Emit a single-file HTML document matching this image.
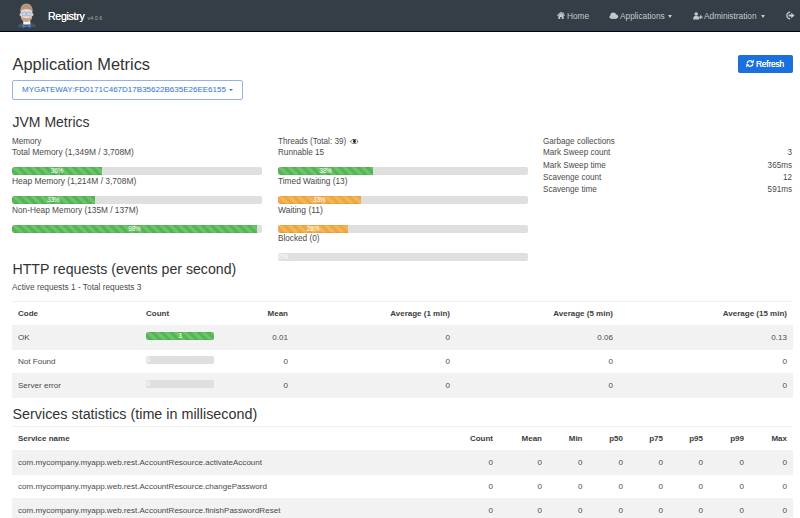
<!DOCTYPE html>
<html><head><meta charset="utf-8">
<style>
*{box-sizing:border-box;margin:0;padding:0}
html,body{width:800px;height:518px;overflow:hidden;background:#fff}
body{font-family:"Liberation Sans",sans-serif;color:#333;font-size:8.2px;position:relative}
.abs{position:absolute;white-space:nowrap}
.nav{position:absolute;left:0;top:0;width:800px;height:32px;background:#353d47;border-bottom:1px solid #02021a}
.brand{position:absolute;left:48px;top:9.5px;color:#fff;font-size:10.6px;letter-spacing:-0.3px;line-height:12px;text-shadow:0 0 0.3px #fff}
.brand small{font-size:5.4px;letter-spacing:0;text-shadow:none;color:#aaa;margin-left:3px}
.caret{position:absolute;top:15px;width:0;height:0;border-left:2.5px solid transparent;border-right:2.5px solid transparent;border-top:3px solid #c4c8cc}
.navl{position:absolute;top:11px;color:#c4c8cc;font-size:8.3px;line-height:10px}
h2{position:absolute;left:12px;font-weight:normal;font-size:16.4px;color:#333;white-space:nowrap;line-height:18px}
h3{position:absolute;left:12px;font-weight:normal;font-size:14px;color:#333;white-space:nowrap;line-height:16px}
.btn-r{position:absolute;left:738px;top:55px;width:55px;height:18px;background:#1b6fdf;border-radius:2px;color:#fff;font-size:7.9px}
.dd{position:absolute;left:12px;top:80px;width:231px;height:20px;border:1px solid #90b3ec;border-radius:2px;color:#2a72da;font-size:8.02px}
.txt{position:absolute;white-space:nowrap;font-size:8.15px;line-height:10px;color:#4a4a4a}
.bar{position:absolute;height:8px;background:#dfdfdf;border-radius:2px;overflow:hidden}
.fill{position:absolute;left:0;top:0;height:8px;border-radius:2px 0 0 2px;
 background-image:linear-gradient(45deg,rgba(255,255,255,.17) 25%,transparent 25%,transparent 50%,rgba(255,255,255,.17) 50%,rgba(255,255,255,.17) 75%,transparent 75%,transparent);
 background-size:9.2px 9.2px;color:#fff;font-size:6.6px;letter-spacing:-0.3px;line-height:8.4px;text-align:center;box-shadow:inset 0 -0.6px 0 rgba(0,100,0,.15),inset 0 0.6px 0 rgba(0,100,0,.1)}
.g{background-color:#53b653}
.o{background-color:#f0a73e}
table{position:absolute;left:12px;width:781px;border-collapse:collapse;table-layout:fixed}
td,th{height:24px;padding:0 6px;font-size:8.05px;vertical-align:middle;white-space:nowrap;border-top:1px solid #f0f0f0;color:#4a4a4a}
th{font-weight:bold;color:#3d3d3d;text-align:left;font-size:8.0px}
tbody tr:nth-child(odd) td{background:#f2f2f2}
.r{text-align:right}
</style></head><body>
<div class="nav">
  <svg class="abs" style="left:16px;top:2px" width="22" height="28" viewBox="0 0 22 28">
  <path d="M1.6 25.2 C2.2 21.8 5.6 20.6 11 20.4 C16.4 20.6 19.8 21.8 20.4 25.2 Z" fill="#4b5160"/>
  <path d="M7.4 18.4 L14.2 18.4 L14.4 22.6 L7.2 22.6 Z" fill="#f2f2f2"/>
  <ellipse cx="4.6" cy="12.6" rx="1" ry="1.5" fill="#e6c6b2"/>
  <ellipse cx="16.4" cy="12.6" rx="1" ry="1.5" fill="#e6c6b2"/>
  <path d="M4.8 9 C4.8 5.5 7.5 4.6 10.5 4.6 C13.5 4.6 16.2 5.5 16.2 9 L16.2 13.5 C16.2 17.8 13.6 20 10.5 20 C7.4 20 4.8 17.8 4.8 13.5 Z" fill="#f0d9c8"/>
  <path d="M4.9 13.8 C5.2 17.8 7.6 19.9 10.5 19.9 C13.4 19.9 15.8 17.8 16.1 13.8 L14.6 15.2 C13.4 15.9 12 16 10.5 16 C9 16 7.6 15.9 6.4 15.2 Z" fill="#c7a189"/>
  <path d="M8.9 17.2 Q10.5 18 12.1 17.2 Q10.5 18.4 8.9 17.2Z" fill="#ead0bc"/>
  <path d="M4.3 11.2 C3.6 4.6 6.8 1.5 10.5 1.5 C14.2 1.5 17.4 4.6 16.7 11.2 C16.1 8.2 15 7.2 10.5 7.2 C6 7.2 4.9 8.2 4.3 11.2 Z" fill="#b4967e"/>
  <rect x="6" y="10.2" width="4.2" height="3.6" rx="0.8" fill="#c6dbef" stroke="#6a98cc" stroke-width="0.55"/>
  <rect x="10.8" y="10.2" width="4.2" height="3.6" rx="0.8" fill="#c6dbef" stroke="#6a98cc" stroke-width="0.55"/>
  <path d="M6.6 22.4 L10.6 24.2 L6.6 26 Z M14.6 22.4 L10.6 24.2 L14.6 26 Z" fill="#3a88d6"/>
  <circle cx="10.6" cy="24.2" r="0.9" fill="#2c72c2"/>
</svg>
  <div class="brand">Registry<small>v4.0.6</small></div>
  <div class="navl" style="left:567px">Home</div>
  <div class="navl" style="left:620px">Applications</div>
  <div class="navl" style="left:704px">Administration</div>
  <svg class="abs" style="left:557px;top:12px" width="8" height="7" viewBox="0 0 8 7"><path d="M0.3 3.6 L4 0.4 L7.7 3.6" fill="none" stroke="#c4c8cc" stroke-width="1.1"/><rect x="5.6" y="0.6" width="1.1" height="2" fill="#c4c8cc"/><path d="M1.4 3.4 L4 1.3 L6.6 3.4 L6.6 7 L4.8 7 L4.8 5 L3.2 5 L3.2 7 L1.4 7 Z" fill="#c4c8cc"/></svg>
  <svg class="abs" style="left:608.5px;top:11.5px" width="10" height="8" viewBox="0 0 10 8"><circle cx="4.3" cy="3.4" r="2.9" fill="#c4c8cc"/><circle cx="7.2" cy="4.6" r="2" fill="#c4c8cc"/><circle cx="2.2" cy="5" r="1.8" fill="#c4c8cc"/><rect x="2.2" y="4" width="5.2" height="2.8" fill="#c4c8cc"/></svg>
  <div class="caret" style="left:668px"></div>
  <svg class="abs" style="left:692.5px;top:11.5px" width="10" height="8" viewBox="0 0 10 8"><circle cx="3.2" cy="2" r="1.8" fill="#c4c8cc"/><path d="M0.1 7.4 C0.1 4.6 1.3 3.8 3.2 3.8 C5.1 3.8 6.3 4.6 6.3 7.4 Z" fill="#c4c8cc"/><path d="M5.9 5.1 H9.6 M7.75 3.2 V7" stroke="#c4c8cc" stroke-width="1.1"/></svg>
  <div class="caret" style="left:761px"></div>
  <svg class="abs" style="left:786px;top:11px" width="10" height="9" viewBox="0 0 10 9"><path d="M4.2 1.1 A3.4 3.4 0 1 0 4.2 7.9" fill="none" stroke="#c4c8cc" stroke-width="1.3"/><path d="M2.6 3.6 H5.3 V1.8 L8.6 4.5 L5.3 7.2 V5.4 H2.6 Z" fill="#c4c8cc"/></svg>

</div>

<h2 style="top:55px;left:12.5px">Application Metrics</h2>
<div class="btn-r"><svg class="abs" style="left:8px;top:4px" width="8" height="9" viewBox="0 0 8 9"><path d="M1.1 4.5 A2.9 2.9 0 0 1 6.4 3" fill="none" stroke="#fff" stroke-width="1.3"/><path d="M4.6 3.7 L7.9 3.7 L7.9 0.6 Z" fill="#fff"/><path d="M6.9 4.5 A2.9 2.9 0 0 1 1.6 6" fill="none" stroke="#fff" stroke-width="1.3"/><path d="M3.4 5.3 L0.1 5.3 L0.1 8.4 Z" fill="#fff"/></svg><span class="abs" style="left:18px;top:4px;font-size:8.4px;letter-spacing:-0.2px;line-height:10px;text-shadow:0 0 0.3px #fff">Refresh</span></div>
<div class="dd"><span class="abs" style="left:9px;top:4px">MYGATEWAY:FD0171C467D17B35622B635E26EE6155</span><div class="abs" style="left:215.5px;top:7.5px;width:0;height:0;border-left:2px solid transparent;border-right:2px solid transparent;border-top:2.5px solid #2e78dc"></div></div>

<h3 style="top:114px;left:12.5px">JVM Metrics</h3>

<div class="txt" style="left:12px;top:137px">Memory</div>
<div class="txt" style="left:12px;top:147px;font-size:8.45px">Total Memory (1,349M / 3,708M)</div>
<div class="bar" style="left:12px;top:167px;width:250px"><div class="fill g" style="width:90px">36%</div></div>
<div class="txt" style="left:12px;top:176px;font-size:8.45px">Heap Memory (1,214M / 3,708M)</div>
<div class="bar" style="left:12px;top:196px;width:250px"><div class="fill g" style="width:82.5px">33%</div></div>
<div class="txt" style="left:12px;top:205px;font-size:8.3px">Non-Heap Memory (135M / 137M)</div>
<div class="bar" style="left:12px;top:225px;width:250px"><div class="fill g" style="width:245px">98%</div></div>

<div class="txt" style="left:278px;top:137px">Threads (Total: 39)</div><svg class="abs" style="left:350px;top:138.5px" width="8.5" height="5" viewBox="0 0 8.5 5"><path d="M0.1 2.5 C1.6 0.3 3 0 4.25 0 C5.5 0 6.9 0.3 8.4 2.5 C6.9 4.7 5.5 5 4.25 5 C3 5 1.6 4.7 0.1 2.5 Z" fill="#3a3a3a"/><ellipse cx="4.25" cy="2.6" rx="3.2" ry="1.8" fill="#fff"/><circle cx="4.4" cy="2.5" r="1.45" fill="#1a1a2a"/></svg>
<div class="txt" style="left:278px;top:148px">Runnable 15</div>
<div class="bar" style="left:278px;top:167px;width:250px"><div class="fill g" style="width:95px">38%</div></div>
<div class="txt" style="left:278px;top:176px;font-size:8.3px">Timed Waiting (13)</div>
<div class="bar" style="left:278px;top:196px;width:250px"><div class="fill o" style="width:82.5px">33%</div></div>
<div class="txt" style="left:278px;top:205px;font-size:8.5px">Waiting (11)</div>
<div class="bar" style="left:278px;top:225px;width:250px"><div class="fill o" style="width:70px">28%</div></div>
<div class="txt" style="left:278px;top:234px;font-size:8.2px">Blocked (0)</div>
<div class="bar" style="left:278px;top:253px;width:250px"><div class="fill" style="width:20px;background:none;box-shadow:none;text-align:left;padding-left:0.6px;line-height:8px">0%</div></div>

<div class="txt" style="left:543px;top:137px">Garbage collections</div>
<div class="txt" style="left:543px;top:148px">Mark Sweep count</div>
<div class="txt" style="left:543px;top:161px">Mark Sweep time</div>
<div class="txt" style="left:543px;top:173px;font-size:8.15px">Scavenge count</div>
<div class="txt" style="left:543px;top:185px;font-size:8.15px">Scavenge time</div>
<div class="txt" style="right:8px;top:148px">3</div>
<div class="txt" style="right:8px;top:161px">365ms</div>
<div class="txt" style="right:8px;top:173px">12</div>
<div class="txt" style="right:8px;top:185px">591ms</div>

<h3 style="top:261px;left:12.5px;font-size:14.15px">HTTP requests (events per second)</h3>
<div class="txt" style="left:12px;top:282px;font-size:8.3px">Active requests 1 - Total requests 3</div>

<table style="top:301px">
<colgroup><col style="width:128px"><col style="width:80px"><col style="width:74px"><col style="width:162px"><col style="width:163px"><col style="width:174px"></colgroup>
<thead><tr><th>Code</th><th>Count</th><th class="r">Mean</th><th class="r">Average (1 min)</th><th class="r">Average (5 min)</th><th class="r">Average (15 min)</th></tr></thead>
<tbody>
<tr><td>OK</td><td></td><td class="r">0.01</td><td class="r">0</td><td class="r">0.06</td><td class="r">0.13</td></tr>
<tr><td>Not Found</td><td></td><td class="r">0</td><td class="r">0</td><td class="r">0</td><td class="r">0</td></tr>
<tr><td>Server error</td><td></td><td class="r">0</td><td class="r">0</td><td class="r">0</td><td class="r">0</td></tr>
</tbody></table>
<div class="bar" style="left:146px;top:331.5px;width:68px"><div class="fill g" style="width:68px">3</div></div>
<div class="bar" style="left:146px;top:356px;width:68px"><div class="fill" style="width:10px;background:none;box-shadow:none;text-align:left;padding-left:0.6px;line-height:8px">0</div></div>
<div class="bar" style="left:146px;top:380px;width:68px"><div class="fill" style="width:10px;background:none;box-shadow:none;text-align:left;padding-left:0.6px;line-height:8px">0</div></div>

<h3 style="top:405.5px;left:12.5px;font-size:14.35px">Services statistics (time in millisecond)</h3>
<table style="top:426px">
<colgroup><col style="width:447px"><col style="width:40px"><col style="width:49px"><col style="width:40.5px"><col style="width:40.5px"><col style="width:40px"><col style="width:40px"><col style="width:41px"><col style="width:43px"></colgroup>
<thead><tr><th>Service name</th><th class="r">Count</th><th class="r">Mean</th><th class="r">Min</th><th class="r">p50</th><th class="r">p75</th><th class="r">p95</th><th class="r">p99</th><th class="r">Max</th></tr></thead>
<tbody>
<tr><td>com.mycompany.myapp.web.rest.AccountResource.activateAccount</td><td class="r">0</td><td class="r">0</td><td class="r">0</td><td class="r">0</td><td class="r">0</td><td class="r">0</td><td class="r">0</td><td class="r">0</td></tr>
<tr><td>com.mycompany.myapp.web.rest.AccountResource.changePassword</td><td class="r">0</td><td class="r">0</td><td class="r">0</td><td class="r">0</td><td class="r">0</td><td class="r">0</td><td class="r">0</td><td class="r">0</td></tr>
<tr><td>com.mycompany.myapp.web.rest.AccountResource.finishPasswordReset</td><td class="r">0</td><td class="r">0</td><td class="r">0</td><td class="r">0</td><td class="r">0</td><td class="r">0</td><td class="r">0</td><td class="r">0</td></tr>
</tbody></table>
</body></html>
